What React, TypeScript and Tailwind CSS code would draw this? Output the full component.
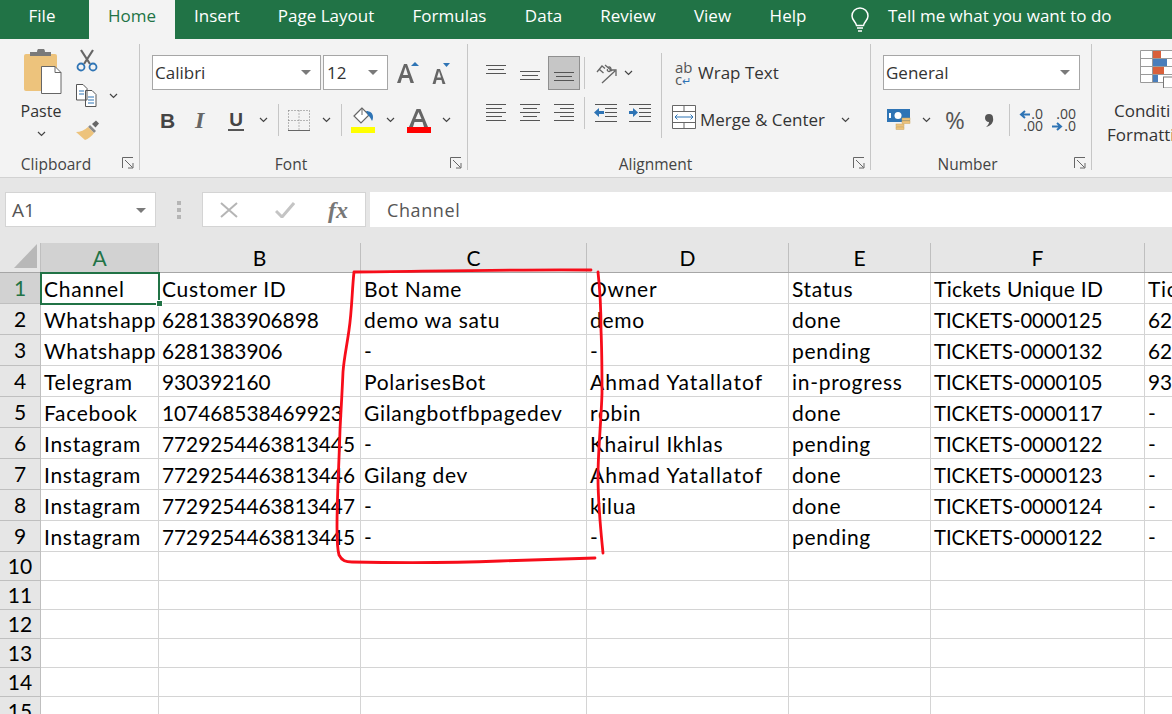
import React from 'react';

const ui = 'font-["Open_Sans","Liberation_Sans",sans-serif]';
const cellFont = 'font-["Lato","Liberation_Sans",sans-serif]';

const tabs = [
  { label: 'File', w: 'w-[89px] pr-[5px]' },
  { label: 'Home', w: 'w-[86px]', active: true },
  { label: 'Insert', w: 'w-[84px]' },
  { label: 'Page Layout', w: 'w-[134px]' },
  { label: 'Formulas', w: 'w-[113px]' },
  { label: 'Data', w: 'w-[75px]' },
  { label: 'Review', w: 'w-[94px]' },
  { label: 'View', w: 'w-[75px]' },
  { label: 'Help', w: 'w-[76px]' },
];

const columns = [
  { name: 'A', cls: 'w-[118px]' },
  { name: 'B', cls: 'w-[202px]' },
  { name: 'C', cls: 'w-[226px]' },
  { name: 'D', cls: 'w-[202px]' },
  { name: 'E', cls: 'w-[142px]' },
  { name: 'F', cls: 'w-[214px]' },
  { name: '', cls: 'w-[28px]' },
];

const rows = [
  ['Channel', 'Customer ID', 'Bot Name', 'Owner', 'Status', 'Tickets Unique ID', 'Tick'],
  ['Whatshapp', '6281383906898', 'demo wa satu', 'demo', 'done', 'TICKETS-0000125', '628'],
  ['Whatshapp', '6281383906', '-', '-', 'pending', 'TICKETS-0000132', '628'],
  ['Telegram', '930392160', 'PolarisesBot', 'Ahmad Yatallatof', 'in-progress', 'TICKETS-0000105', '930'],
  ['Facebook', '107468538469923', 'Gilangbotfbpagedev', 'robin', 'done', 'TICKETS-0000117', '-'],
  ['Instagram', '7729254463813445', '-', 'Khairul Ikhlas', 'pending', 'TICKETS-0000122', '-'],
  ['Instagram', '7729254463813446', 'Gilang dev', 'Ahmad Yatallatof', 'done', 'TICKETS-0000123', '-'],
  ['Instagram', '7729254463813447', '-', 'kilua', 'done', 'TICKETS-0000124', '-'],
  ['Instagram', '7729254463813445', '-', '-', 'pending', 'TICKETS-0000122', '-'],
];

// Lato runs narrower than the sheet's font on letters but not on digits
const cellTracking = (v: string) => {
  if (/^\d+$/.test(v)) return 'text-[20.8px]';
  if (v.startsWith('TICKETS')) return 'text-[20.2px]';
  if (v === 'Tickets Unique ID') return 'text-[21px] tracking-[0.3px]';
  if (v === 'Ahmad Yatallatof') return 'text-[21px] tracking-[1.1px]';
  return 'text-[21px] tracking-[0.7px]';
};

const Chev = ({ className = '' }: { className?: string }) => (
  <svg width="9" height="6" viewBox="0 0 9 6" className={className}>
    <path d="M1 1l3.5 3.5L8 1" fill="none" stroke="#444" strokeWidth="1.2" />
  </svg>
);

const Caret = () => (
  <svg width="10" height="5" viewBox="0 0 10 5"><path d="M0 0h10L5 5z" fill="#7a7a7a" /></svg>
);

const Launcher = () => (
  <svg width="12" height="12" viewBox="0 0 12 12" className="shrink-0">
    <path d="M.5 11V.5H11M3 3l7.5 7.5M11 6v5H6" fill="none" stroke="#666" strokeWidth="1" />
  </svg>
);

const Combo = ({ text, cls }: { text: string; cls: string }) => (
  <div className={`${cls} h-[35px] flex items-center justify-between border border-[#a6a6a6] bg-white pl-[2px] pr-[9px] text-[17px] text-[#333] shrink-0`}>
    <span>{text}</span>
    <Caret />
  </div>
);

const Group = ({ label, cls, labelCls, children }: { label: string; cls: string; labelCls: string; children: React.ReactNode }) => (
  <div className={`${cls} h-[126px] mt-[5px] flex flex-col border-r border-[#c6c6c6] shrink-0`}>
    <div className="flex-1 min-h-0">{children}</div>
    <div className="h-[14px] flex items-center pr-[5px]">
      <span className={`flex-1 text-center text-[15.5px] leading-[16px] text-[#444] pt-[1px] ${labelCls}`}>{label}</span>
      <Launcher />
    </div>
  </div>
);

const Lines = ({ widths, align }: { widths: number[]; align: 'l' | 'c' | 'r' }) => (
  <svg width="20" height="21" viewBox="0 0 20 21">
    {widths.map((w, i) => {
      const x = align === 'l' ? 0 : align === 'r' ? 20 - w : (20 - w) / 2;
      return <rect key={i} x={x} y={i * 4 + 1} width={w} height="1" fill="#555" />;
    })}
  </svg>
);

const VAlign = () => (
  <svg width="20" height="10" viewBox="0 0 20 10">
    <rect x="0" y="0" width="20" height="1" fill="#555" />
    <rect x="2" y="4" width="16" height="1" fill="#555" />
    <rect x="0" y="8" width="20" height="1" fill="#555" />
  </svg>
);

const Indent = ({ flip }: { flip?: boolean }) => (
  <svg width="23" height="21" viewBox="0 0 23 21">
    <g fill="#555">
      <rect x="1" y="1" width="22" height="1" />
      <rect x="11" y="5" width="12" height="1" />
      <rect x="11" y="9" width="12" height="1" />
      <rect x="11" y="13" width="12" height="1" />
      <rect x="1" y="18" width="22" height="1" />
    </g>
    {flip ? (
      <path d="M1 8h4V5l5 4.500-5 4.500v-3H1z" fill="#2e74b5" />
    ) : (
      <path d="M10 8H5V5L0 9.500 5 14v-3h5z" fill="#2e74b5" />
    )}
  </svg>
);

const DecArrow = ({ right }: { right?: boolean }) => (
  <svg width="11" height="9" viewBox="0 0 11 9" className="mr-[1px] mb-[-1px]">
    <path d={right ? 'M0 4.500h8M5 1l4 3.500L5 8' : 'M11 4.500H3M6 1L2 4.500 6 8'} fill="none" stroke="#2e74b5" strokeWidth="2" />
  </svg>
);

const Sep = ({ cls }: { cls: string }) => <div className={`w-px bg-[#c6c6c6] shrink-0 ${cls}`} />;

const Annotation = () => (
  <svg width="1172" height="714" viewBox="0 0 1172 714" className="absolute left-0 top-0 pointer-events-none">
    <g fill="none" stroke="#f70d1a" strokeWidth="2.8" strokeLinecap="round" strokeLinejoin="round">
      <path d="M591 270C540 269 440 271 354 272C352 290 352 310 349 330C347 345 344 358 343 372C342 395 341 410 340 430C339 465 337 495 337 527C337 540 337 548 339 555C342 561 346 562 352 562C400 563 450 563 500 561C540 560 570 559 595 558" />
      <path d="M598 272C600 290 601 310 601 330C602 352 602 372 602 393C601 425 598 450 598 477C598 495 599 505 600 520C601 533 602 543 603 553" />
    </g>
  </svg>
);

export default function App() {
  return (
    <div className={`relative w-[1172px] h-[714px] overflow-hidden bg-white ${ui}`}>
      {/* tabs */}
      <div className="flex h-[39px] bg-[#217346] text-white text-[17px]">
        {tabs.map((t) => (
          <div
            key={t.label}
            className={`${t.w} flex items-center justify-center shrink-0 pb-[8px] ${t.active ? 'bg-[#f3f3f3] text-[#217346]' : ''}`}
          >
            {t.label}
          </div>
        ))}
        <div className="flex items-center pl-[24px] gap-[18px] pb-[8px]">
          <svg width="20" height="26" viewBox="0 0 20 26" className="mt-[8px]">
            <path d="M6.500 18.500C6 15 2 13.500 2 9a8 8 0 0 1 16 0c0 4.500-4 6-4.500 9.500zM7 21h6M8 24h4" fill="none" stroke="#fff" strokeWidth="1.500" />
          </svg>
          <span className="whitespace-nowrap">Tell me what you want to do</span>
        </div>
      </div>

      {/* ribbon */}
      <div className="flex h-[139px] bg-[#f3f3f3] border-b border-[#d2d2d2]">
        <Group label="Clipboard" cls="w-[140px]" labelCls="pr-[10px]">
          <div className="flex pl-[18px]">
            <div className="w-[46px] flex flex-col items-center pt-[5px]">
              <svg width="42" height="46" viewBox="0 0 42 46">
                <rect x="4" y="5" width="33" height="37" rx="2" fill="#edc37c" />
                <path d="M10 7V3h7a4 4 0 0 1 8 0h6v4z" fill="#7a7a7a" />
                <path d="M21.500 17.500H35l6 6v21H21.500z" fill="#fff" stroke="#666" />
                <path d="M35 17.500v6h6" fill="none" stroke="#666" />
              </svg>
              <span className="text-[16px] leading-[22px] mt-[5px] text-[#333]">Paste</span>
              <Chev className="mt-[9px]" />
            </div>
            <div className="ml-[12px] flex flex-col pt-[5px]">
              <svg width="22" height="23" viewBox="0 0 22 23">
                <path d="M5 1l9 14M17 1L8 15" fill="none" stroke="#666" strokeWidth="2.200" />
                <circle cx="5" cy="18" r="3.500" fill="none" stroke="#2e74b5" strokeWidth="1.800" />
                <circle cx="17" cy="18" r="3.500" fill="none" stroke="#2e74b5" strokeWidth="1.800" />
              </svg>
              <div className="flex items-center mt-[12px]">
                <svg width="21" height="23" viewBox="0 0 21 23">
                  <path d="M.500.500H7l4 4V16H.500zM9.500 6.500H16l4 4v12H9.500z" fill="#fff" stroke="#555" />
                  <path d="M3 7h5M3 10h5M12 13h6M12 16h6M12 19h6" stroke="#2e74b5" />
                </svg>
                <Chev className="ml-[12px] mt-[1px]" />
              </div>
              <svg width="25" height="21" viewBox="0 0 25 21" className="mt-[13px]">
                <path d="M16 4l4-3.500 3 3-3.500 4z" fill="#666" />
                <path d="M14 5l6 6-2 2-6-6z" fill="#8a8a8a" />
                <path d="M12 7l6 6c-2 3-6 6-9 7L0 12c4 0 9-2 12-5z" fill="#edc37c" />
              </svg>
            </div>
          </div>
        </Group>

        <Group label="Font" cls="w-[328px]" labelCls="pr-[8px]">
          <div className="flex items-center gap-[2px] pl-[12px] pt-[11px]">
            <Combo text="Calibri" cls="w-[169px]" />
            <Combo text="12" cls="w-[65px] !pl-[3px]" />
            <svg width="24" height="24" viewBox="0 0 24 24" className="ml-[6px]">
              <path d="M8 3h3l7 19h-3.500l-1.500-5H6l-1.500 5H1zM7 14h5L9.500 6z" fill="#666" fillRule="evenodd" />
              <path d="M15 5l4-4 4 4z" fill="#2e74b5" />
            </svg>
            <svg width="22" height="22" viewBox="0 0 22 22" className="ml-[9px]">
              <path d="M6 7h3l5.500 15h-3l-1-4h-5l-1 4H1.500zM6 15.500h4L8 9z" fill="#666" fillRule="evenodd" />
              <path d="M12 1h7l-3.500 4z" fill="#2e74b5" />
            </svg>
          </div>
          <div className="flex items-center h-[30px] mt-[15px] pl-[20px] text-[#444]">
            <span className="w-[15px] text-[21px] font-bold leading-none font-['Liberation_Sans',sans-serif]">B</span>
            <span className="ml-[20px] w-[14px] text-[24px] italic font-bold leading-none text-[#666] font-['Liberation_Serif',serif]">I</span>
            <span className="ml-[19px] w-[16px] text-[19px] font-bold leading-none border-b-2 border-[#555] text-center font-['Liberation_Sans',sans-serif]">U</span>
            <Chev className="ml-[15px]" />
            <Sep cls="h-[32px] ml-[10px]" />
            <svg width="22" height="21" viewBox="0 0 22 21" className="ml-[9px]">
              <path d="M.500.500h21v20H.500zM11 .500v20M.500 10.500h21" fill="none" stroke="#777" strokeDasharray="1 2" />
              <path d="M0 20.500h22" stroke="#666" />
            </svg>
            <Chev className="ml-[12px]" />
            <Sep cls="h-[32px] ml-[10px]" />
            <div className="ml-[8px] w-[25px] flex flex-col items-center">
              <svg width="24" height="20" viewBox="0 0 24 20">
                <path d="M11 1L3 9l7 7 8-8z" fill="#fff" stroke="#666" strokeWidth="1.200" />
                <path d="M11 1v7" stroke="#666" />
                <path d="M15 4c4 0 7 2 7 6 0 2-.5 3-1 4-1-2-2-4-4-6z" fill="#2e74b5" />
              </svg>
              <div className="w-[24px] h-[6px] bg-[#ffff00]" />
            </div>
            <Chev className="ml-[11px]" />
            <div className="ml-[12px] w-[24px] flex flex-col items-center">
              <svg width="22" height="20" viewBox="0 0 22 20">
                <path d="M8.500 2h4L20 20h-4l-1.500-5h-8L5 20H1zM7.500 12h6L10.500 5z" fill="#666" fillRule="evenodd" />
              </svg>
              <div className="w-[24px] h-[6px] bg-[#ff0000]" />
            </div>
            <Chev className="ml-[11px]" />
          </div>
        </Group>

        <Group label="Alignment" cls="w-[403px]" labelCls="pr-[10px]">
          <div className="flex">
            <div className="w-[193px] shrink-0">
              <div className="flex items-center h-[34px] mt-[12px] pl-[18px]">
                <div className="mb-[6px]"><VAlign /></div>
                <div className="ml-[14px] mt-[6px]"><VAlign /></div>
                <div className="ml-[8px] w-[32px] h-[34px] flex items-end justify-center pb-[7px] bg-[#c6c6c6] border border-[#8f8f8f]">
                  <VAlign />
                </div>
                <Sep cls="h-[32px] ml-[4px]" />
                <svg width="21" height="21" viewBox="0 0 21 21" className="ml-[11px]">
                  <path d="M1 9l5-6 3 2.500M3.500 6.500l4 3.500M9 2l7 6M12 4.500c2-1.500 4 1 2.500 3s-4 .5-3-1.500" fill="none" stroke="#666" strokeWidth="1.300" />
                  <path d="M6 20L19 8M14 7h6v6" fill="none" stroke="#666" strokeWidth="1.300" />
                </svg>
                <Chev className="ml-[7px]" />
              </div>
              <div className="flex items-center h-[32px] mt-[7px] pl-[18px]">
                <Lines widths={[20, 16, 20, 16, 20, 16]} align="l" />
                <div className="ml-[14px]"><Lines widths={[20, 14, 20, 14, 20, 14]} align="c" /></div>
                <div className="ml-[14px]"><Lines widths={[20, 14, 20, 14, 20, 14]} align="r" /></div>
                <Sep cls="h-[32px] ml-[10px]" />
                <div className="ml-[9px]"><Indent /></div>
                <div className="ml-[11px]"><Indent flip /></div>
              </div>
            </div>
            <div className="w-px h-[85px] mt-[9px] bg-[#c6c6c6] shrink-0" />
            <div className="pl-[10px] text-[17px] text-[#333]">
              <div className="flex items-center h-[26px] mt-[16px]">
                <div className="w-[23px] h-[24px] ml-[3px] text-[15px] leading-[12px] text-[#555]">
                  <span className="block">ab</span>
                  <span className="block">c<span className="text-[#2e74b5] text-[11px]">↵</span></span>
                </div>
                <span>Wrap Text</span>
              </div>
              <div className="flex items-center h-[26px] mt-[18px]">
                <svg width="24" height="24" viewBox="0 0 24 24">
                  <path d="M.500.500h23v23H.500zM.500 6.500h23M.500 17.500h23M12 .500v6M12 17.500v6" fill="#fff" stroke="#666" />
                  <path d="M3 12h18M5.500 9.500L3 12l2.500 2.500M18.500 9.500L21 12l-2.500 2.500" fill="none" stroke="#2e74b5" />
                </svg>
                <span className="ml-[4px] mt-[5px] whitespace-nowrap">Merge &amp; Center</span>
                <Chev className="ml-[16px] mt-[5px]" />
              </div>
            </div>
          </div>
        </Group>

        <Group label="Number" cls="w-[221px]" labelCls="pr-[10px]">
          <div className="pl-[12px] pt-[11px]">
            <Combo text="General" cls="w-[197px]" />
          </div>
          <div className="flex items-center h-[30px] mt-[15px] pl-[16px] text-[#555]">
            <svg width="24" height="24" viewBox="0 0 24 24">
              <rect x="0" y="1" width="23" height="13" fill="#2e74b5" />
              <ellipse cx="11" cy="7.500" rx="3.500" ry="3.500" fill="#fff" />
              <rect x="2" y="5" width="2" height="5" fill="#fff" />
              <g fill="#edc37c" stroke="#c9a35c" strokeWidth=".5">
                <rect x="15" y="10" width="8" height="2.500" />
                <rect x="15" y="13" width="8" height="2.500" />
                <rect x="9" y="16" width="8" height="2.500" />
                <rect x="9" y="19" width="8" height="2.500" />
              </g>
            </svg>
            <Chev className="ml-[11px]" />
            <span className="ml-[14px] w-[21px] text-[24px] leading-none">%</span>
            <svg width="9" height="13" viewBox="0 0 9 13" className="ml-[19px]">
              <path d="M0 4a4 4 0 0 1 8 0c1 4-2 8-7 9 2-2 3-3 3-5-2.500 0-4-2-4-4z" fill="#555" />
            </svg>
            <Sep cls="h-[32px] ml-[15px]" />
            <div className="ml-[9px] w-[24px] text-[14px] leading-[12px] text-[#444]">
              <div className="flex justify-end items-center"><DecArrow />.0</div>
              <div className="text-right">.00</div>
            </div>
            <div className="ml-[9px] w-[24px] text-[14px] leading-[12px] text-[#444]">
              <div className="text-right">.00</div>
              <div className="flex justify-end items-center"><DecArrow right />.0</div>
            </div>
          </div>
        </Group>

        <div className="flex-1 flex flex-col items-start text-[17px] leading-[24px] text-[#333] whitespace-nowrap overflow-hidden">
          <svg width="34" height="38" viewBox="0 0 34 38" className="ml-[48px] mt-[11px] shrink-0">
            <path d="M.500.500h32v32H.500zM.500 8.500h32M.500 16.500h32M.500 24.500h32M12.500 .500v32" fill="#fff" stroke="#9a9a9a" />
            <rect x="13" y="1" width="8" height="7" fill="#d9603b" />
            <rect x="13" y="9" width="14" height="7" fill="#4a7ebb" />
            <rect x="13" y="17" width="11" height="7" fill="#d9603b" />
            <rect x="13" y="25" width="5" height="7" fill="#4a7ebb" />
            <rect x="23.500" y="27" width="10" height="11" fill="#fff" stroke="#777" />
          </svg>
          <span className="ml-[22px] mt-[11px]">Conditi</span>
          <span className="ml-[15px]">Formatti</span>
        </div>
      </div>

      {/* formula bar */}
      <div className="flex h-[65px] pt-[14px] bg-[#e6e6e6] text-[#555]">
        <div className="ml-[5px] w-[151px] h-[35px] flex items-center justify-between bg-white border border-[#d4d4d4] pl-[6px] pr-[9px] pt-[1px] text-[19px]">
          <span>A1</span>
          <Caret />
        </div>
        <div className="ml-[20px] w-[6px] h-[35px] flex flex-col justify-center items-center gap-[3px]">
          <i className="block w-[4px] h-[4px] bg-[#b5b5b5]" />
          <i className="block w-[4px] h-[4px] bg-[#b5b5b5]" />
          <i className="block w-[4px] h-[4px] bg-[#b5b5b5]" />
        </div>
        <div className="ml-[20px] w-[164px] h-[35px] flex items-center bg-white border border-[#d4d4d4]">
          <svg width="18" height="16" viewBox="0 0 18 16" className="ml-[17px]">
            <path d="M1 1l16 14M17 1L1 15" stroke="#b5b5b5" strokeWidth="2" />
          </svg>
          <svg width="20" height="16" viewBox="0 0 20 16" className="ml-[37px]">
            <path d="M1 9l6 6L19 1" fill="none" stroke="#c4c4c4" strokeWidth="3" />
          </svg>
          <span className="ml-[33px] text-[24px] italic font-bold leading-none text-[#777] font-['Liberation_Serif',serif]">fx</span>
        </div>
        <div className="ml-[4px] flex-1 h-[35px] flex items-center bg-white pl-[17px] pt-[1px] text-[18px] tracking-[0.6px]">Channel</div>
      </div>

      {/* sheet */}
      <div className={`${cellFont} text-[21px] text-black`}>
        <div className="flex h-[30px] bg-[#e6e6e6] border-b border-[#a6a6a6]">
          <div className="relative w-[41px] shrink-0 border-r border-[#bfbfbf]">
            <svg width="24" height="24" viewBox="0 0 24 24" className="absolute right-[2px] bottom-[4px]">
              <path d="M23 0v24H0z" fill="#b8b8b8" />
            </svg>
          </div>
          {columns.map((c, i) => (
            <div
              key={c.name}
              className={`${c.cls} shrink-0 flex items-center justify-center border-r border-[#bfbfbf] ${i === 0 ? 'bg-[#d2d2d2] text-[#217346]' : ''}`}
            >
              {c.name}
            </div>
          ))}
        </div>

        {rows.map((r, i) => (
          <div key={i} className="flex h-[31px]">
            <div className={`w-[41px] shrink-0 flex items-center justify-center border-r border-b border-[#bfbfbf] ${i === 0 ? 'bg-[#d2d2d2] text-[#217346]' : 'bg-[#e6e6e6]'}`}>
              {i + 1}
            </div>
            {r.map((v, j) => (
              <div
                key={j}
                className={`${columns[j].cls} shrink-0 flex items-center pl-[3px] pt-[2px] whitespace-nowrap overflow-hidden border-r border-b border-[#d4d4d4] ${cellTracking(v)}`}
              >
                {v}
              </div>
            ))}
          </div>
        ))}

        {[10, 11, 12, 13, 14, 15].map((n) => (
          <div key={n} className="flex h-[29px]">
            <div className="w-[41px] shrink-0 flex items-center justify-center bg-[#e6e6e6] border-r border-b border-[#bfbfbf]">{n}</div>
            {columns.map((c) => (
              <div key={c.name} className={`${c.cls} shrink-0 border-r border-b border-[#d4d4d4]`} />
            ))}
          </div>
        ))}
      </div>

      {/* A1 selection */}
      <div className="absolute left-[40px] top-[272px] w-[120px] h-[33px] border-2 border-[#217346] pointer-events-none" />
      <div className="absolute left-[156px] top-[300px] w-[7px] h-[7px] bg-[#217346] border border-white" />
      <Annotation />
    </div>
  );
}
